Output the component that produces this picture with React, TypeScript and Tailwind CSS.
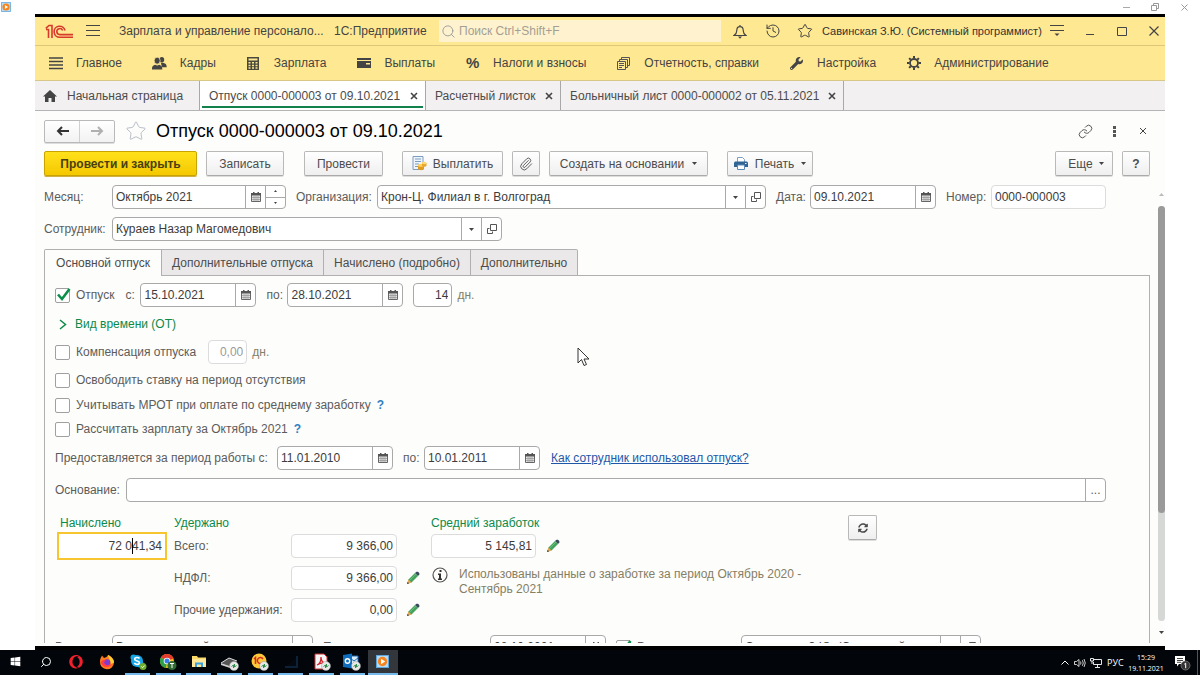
import type { ReactNode } from 'react'
import { History, Link, Paperclip, Search, Star } from 'lucide-react'
import { FaSyncAlt, FaWrench, FaWindows, FaOpera } from 'react-icons/fa'
import { clsx } from 'clsx'

/* ---------- icons ---------- */

function CalendarIcon() {
  return (
    <svg width="10" height="10" viewBox="0 0 10 10">
      <path d="M.5 1.500h9v8h-9z" fill="#e4e4e4" stroke="#666" />
      <path d="M0 1h10v2.500H0z" fill="#555" />
      <path d="M2 0h1.500v2H2zM6.500 0H8v2H6.500z" fill="#555" />
      <path d="M1 5.500h8M1 7.500h8M3 4v5M5 4v5M7 4v5" stroke="#888" strokeWidth="0.600" />
    </svg>
  )
}

function OpenIcon() {
  return (
    <svg width="10" height="10" viewBox="0 0 10 10" fill="none" stroke="#555">
      <path d="M3.500 0.500h6v6h-6z" />
      <path d="M2.500 4.500h-2v5h5v-2" />
    </svg>
  )
}

function Caret({ up = false }: { up?: boolean }) {
  return (
    <svg width="5" height="3" viewBox="0 0 5 3" fill="#444">
      <path d={up ? 'M0 3h5L2.500 0z' : 'M0 0h5L2.500 3z'} />
    </svg>
  )
}

function PencilIcon() {
  return (
    <svg width="14" height="14" viewBox="0 0 14 14">
      <path d="M1 13l1.500-4.500L9 2l3 3-6.500 6.500z" fill="#43a35c" />
      <path d="M1 13l1.500-4.500 3 3z" fill="#e8a85a" />
      <path d="M1 13l.7-2 1.300 1.300z" fill="#333" />
      <path d="M9 2l1.500-1.300h1.500L13.300 2v1.500L12 5z" fill="#3c4a5e" />
      <path d="M3.500 9.500L10 3" stroke="#6cc07e" />
    </svg>
  )
}

function Logo1C() {
  return (
    <svg width="29" height="15" viewBox="0 0 29 15" fill="none" stroke="#d8392b" strokeWidth="1.600">
      <path d="M.8 4.300L4 1.500h3V14M1 5.500h2.500V14" />
      <path d="M20 6.500A5.500 5.500 0 1 0 14.800 13.200H28" />
      <path d="M17.600 6.500A3 3 0 1 0 14.800 10.600H28" />
    </svg>
  )
}

function CloseX({ size = 8, thick = 1 }: { size?: number; thick?: number }) {
  return (
    <svg width={size} height={size} viewBox="0 0 8 8" stroke="#444" strokeWidth={thick}>
      <path d="M1 1l6 6M7 1L1 7" />
    </svg>
  )
}

function BellIcon() {
  return (
    <svg width="14" height="15" viewBox="0 0 14 15" fill="none" stroke="#444" strokeWidth="1.200">
      <path d="M7 1v1.500M3.800 6.500C3.800 4 5 2.700 7 2.700s3.200 1.300 3.200 3.800c0 2.500 1 3.700 2.800 5H1c1.800-1.300 2.800-2.500 2.800-5z" />
      <path d="M5 12.500h4L7 14.800z" fill="#444" stroke="none" />
    </svg>
  )
}

function HomeIcon() {
  return (
    <svg width="14" height="12" viewBox="0 0 14 12" fill="#444">
      <path d="M7 0l7 6.500h-2V12H8.500V8h-3v4H2V6.500H0z" />
    </svg>
  )
}

function PeopleIcon() {
  return (
    <svg width="16" height="14" viewBox="0 0 16 14" fill="#444">
      <ellipse cx="10.500" cy="3.500" rx="2.500" ry="3" />
      <path d="M9.500 7h3c2 .8 3.200 1.500 3.200 4.500h-5z" />
      <ellipse cx="5.500" cy="4.500" rx="3.200" ry="3.700" stroke="#ffe892" strokeWidth="0.800" />
      <path d="M0 14c0-3.500.7-4.200 3.500-5.200 1 1 3 1 4 0 2.800 1 3.500 1.700 3.500 5.200z" />
    </svg>
  )
}

function GearIcon() {
  return (
    <svg width="14" height="14" viewBox="0 0 14 14" fill="none" stroke="#444">
      <circle cx="7" cy="7" r="4" strokeWidth="1.800" />
      <path d="M7 0v2.500M7 11.500V14M0 7h2.500M11.500 7H14M2.100 2.100l1.700 1.700M10.200 10.200l1.700 1.700M11.900 2.100l-1.700 1.700M3.800 10.200l-1.700 1.700" strokeWidth="2" />
    </svg>
  )
}

function ListIcon() {
  return (
    <svg width="14" height="13" viewBox="0 0 14 13" stroke="#444" strokeWidth="1.500">
      <path d="M0 1h14M0 4.500h14M0 8h14M0 11.500h14" />
    </svg>
  )
}

function CalcIcon() {
  return (
    <svg width="12" height="13" viewBox="0 0 12 13">
      <path d="M0 0h12v13H0z" fill="#4a4a3c" />
      <path d="M1.500 1.500h9v2h-9zM1.500 5h2v1.500h-2zM5 5h2v1.500H5zM8.500 5h2v1.500h-2zM1.500 7.700h2v1.500h-2zM5 7.700h2v1.500H5zM8.500 7.700h2v1.500h-2zM1.500 10.300h2v1.500h-2zM5 10.300h2v1.500H5zM8.500 10.300h2v1.500h-2z" fill="#ffe892" />
    </svg>
  )
}

function WalletIcon() {
  return (
    <svg width="14" height="10" viewBox="0 0 14 10">
      <path d="M0 0h14v2H0zM0 3h14v7H0z" fill="#444" />
      <path d="M9 5h4v1.500H9z" fill="#ffe892" />
    </svg>
  )
}

function PagesIcon() {
  return (
    <svg width="13" height="13" viewBox="0 0 13 13" fill="none" stroke="#555">
      <path d="M4.500 2.500v-2h8v8h-2M2.500 4.500v-2h8v8h-2" />
      <path d="M.5 4.500h8v8h-8zM2 6.500h5M2 8.500h5M2 10.500h3" />
    </svg>
  )
}

function PayIcon() {
  return (
    <svg width="15" height="15" viewBox="0 0 15 15">
      <path d="M1 .5h10v13H1z" fill="#eef4fb" stroke="#7f9dbf" />
      <path d="M3 3h6M3 5.500h6M3 8h4M3 10.500h3" stroke="#7f9dbf" />
      <path d="M6 9v4c1 1.500 5 1.500 6 0V9z" fill="#e29a1e" />
      <ellipse cx="9" cy="9.200" rx="3" ry="1.500" fill="#ffd25e" />
      <path d="M10 7v3c1 1 3.500 1 4.500 0V7z" fill="#e8a52a" />
      <ellipse cx="12.200" cy="7" rx="2.300" ry="1.200" fill="#ffd86e" />
    </svg>
  )
}

function PrinterIcon() {
  return (
    <svg width="14" height="13" viewBox="0 0 14 13">
      <path d="M3.500 5V.5h5l2 2V5" fill="#fff" stroke="#7aa0c4" />
      <path d="M1 4.500h12l1 1V10H0V5.500z" fill="#2f6495" />
      <path d="M3.500 8h7v4.500h-7z" fill="#fff" stroke="#5a8ab5" />
      <path d="M11 6h1.500v1H11z" fill="#fff" />
    </svg>
  )
}

/* ---------- form parts ---------- */

interface FieldProps {
  id: string
  value: string
  label?: string
  className?: string
  right?: boolean
  muted?: boolean
  disabled?: boolean
  children?: ReactNode
}

function Field({ id, value, label, className, right, muted, disabled, children }: FieldProps) {
  return (
    <div
      className={clsx(
        'flex h-6 items-stretch overflow-hidden rounded border bg-white',
        muted ? 'border-[#dcdcdc]' : 'border-[#a9a9a9]',
        className,
      )}
    >
      <input
        id={id}
        aria-label={label}
        defaultValue={value}
        readOnly={muted}
        disabled={disabled}
        className={clsx(
          'w-full min-w-0 flex-1 bg-transparent px-[3px] outline-none',
          right && 'text-right',
          disabled ? 'text-[#999]' : 'text-[#3c3c3c]',
        )}
      />
      {children}
    </div>
  )
}

function FieldButton({ label, children }: { label: string; children?: ReactNode }) {
  return (
    <button type="button" aria-label={label} className="flex w-5 shrink-0 items-center justify-center border-l border-[#a9a9a9]">
      {children}
    </button>
  )
}

function DateField({ id, value, className, label }: { id: string; value: string; className?: string; label?: string }) {
  return (
    <Field id={id} value={value} label={label} className={clsx('shrink-0', className)}>
      <FieldButton label="Выбрать дату"><CalendarIcon /></FieldButton>
    </Field>
  )
}

function Check({ id, label, checked = false }: { id: string; label: string; checked?: boolean }) {
  return (
    <div className="flex items-center gap-[6px]">
      <span className="relative flex">
        <input
          id={id}
          type="checkbox"
          defaultChecked={checked}
          className="peer h-[15px] w-[15px] appearance-none rounded-xs border border-[#a0a0a0] bg-white"
        />
        <svg className="pointer-events-none absolute bottom-px left-px hidden peer-checked:block" width="15" height="14" viewBox="0 0 15 14" fill="none" stroke="#0a8f4a" strokeWidth="2.600">
          <path d="M2 6.500l4 4.500L13.500 1" />
        </svg>
      </span>
      <label htmlFor={id}>{label}</label>
    </div>
  )
}

function ToolButton({ className, label, children }: { className?: string; label?: string; children: ReactNode }) {
  return (
    <button
      type="button"
      aria-label={label}
      className={clsx(
        'flex h-[25px] shrink-0 items-center justify-center rounded-xs border border-[#b9b9b9] border-b-[#aaa] bg-linear-to-b from-white to-[#efefef] text-[#4c4c4c] shadow-[0_1px_0_#ddd]',
        className,
      )}
    >
      {children}
    </button>
  )
}

/* ---------- application chrome ---------- */

const menu = [
  { title: 'Главное', icon: <ListIcon /> },
  { title: 'Кадры', icon: <PeopleIcon /> },
  { title: 'Зарплата', icon: <CalcIcon /> },
  { title: 'Выплаты', icon: <WalletIcon /> },
  { title: 'Налоги и взносы', icon: <b className="text-[15px]">%</b> },
  { title: 'Отчетность, справки', icon: <PagesIcon /> },
  { title: 'Настройка', icon: <FaWrench size={13} /> },
  { title: 'Администрирование', icon: <GearIcon /> },
]

function TitleBar() {
  return (
    <header className="flex h-[29px] shrink-0 items-center border-b border-[#dcc878] bg-[#ffe892] pr-1 pl-[10px] text-[#444]">
      <Logo1C />
      <button type="button" aria-label="Меню" className="ml-3">
        <svg width="14" height="12" viewBox="0 0 14 12" stroke="#444"><path d="M0 .5h14M0 5.500h14M0 10.500h14" /></svg>
      </button>
      <span className="ml-[19px] w-[208px] whitespace-nowrap">Зарплата и управление персонало...</span>
      <span className="ml-[7px] w-[94px] whitespace-nowrap">1С:Предприятие</span>
      <div className="ml-[11px] flex h-[22px] flex-1 items-center gap-[3px] bg-[#fff3cf] px-[2px]">
        <Search size={15} strokeWidth={1.5} color="#999" />
        <input aria-label="Поиск" placeholder="Поиск Ctrl+Shift+F" className="min-w-0 flex-1 bg-transparent outline-none placeholder:text-[#a39f92]" />
      </div>
      <button type="button" aria-label="Уведомления" className="ml-3"><BellIcon /></button>
      <button type="button" aria-label="История" className="ml-[18px]"><History size={16} strokeWidth={1.5} /></button>
      <button type="button" aria-label="Избранное" className="ml-4"><Star size={16} strokeWidth={1.5} /></button>
      <span className="ml-[9px] w-[215px] whitespace-nowrap text-[11px] text-[#333]">Савинская З.Ю. (Системный программист)</span>
      <button type="button" aria-label="Настройка панели" className="ml-[13px]">
        <svg width="14" height="12" viewBox="0 0 14 12" stroke="#444"><path d="M0 .5h14M0 5.500h14" /><path d="M4.500 8.500h5L7 11z" fill="#444" stroke="none" /></svg>
      </button>
      <button type="button" aria-label="Свернуть" className="ml-[21px]">
        <svg width="10" height="10" viewBox="0 0 10 10" stroke="#444"><path d="M1 8.500h8" /></svg>
      </button>
      <button type="button" aria-label="Развернуть" className="ml-[22px]">
        <svg width="10" height="10" viewBox="0 0 10 10" stroke="#444" fill="none"><path d="M.5 1.500h9v8h-9z" /></svg>
      </button>
      <button type="button" aria-label="Закрыть" className="mr-px ml-[21px]"><CloseX size={12} thick={0.8} /></button>
    </header>
  )
}

function MainMenu() {
  return (
    <nav className="flex h-[35px] shrink-0 items-center gap-[30px] border-b border-[#d8c888] bg-[#ffe892] pl-[13px] text-[#444]">
      {menu.map((item) => (
        <button key={item.title} type="button" className="flex items-center gap-[13px] whitespace-nowrap">
          <span className="flex w-[15px] justify-center text-[#444]">{item.icon}</span>
          {item.title}
        </button>
      ))}
    </nav>
  )
}

function OpenTab({ title, active, className }: { title: string; active?: boolean; className: string }) {
  return (
    <div className={clsx('flex border-r border-[#a8a8a8] px-[2px] pb-[2px]', active && 'bg-white', className)}>
      <div className={clsx('flex flex-1 items-center justify-between border-b-2 pt-1 pr-[5px] pl-[7px]', active ? 'border-[#12824c]' : 'border-transparent')}>
        <button type="button" className="whitespace-nowrap">{title}</button>
        <button type="button" aria-label={'Закрыть ' + title}><CloseX thick={1.6} /></button>
      </div>
    </div>
  )
}

function OpenTabs() {
  return (
    <div className="flex h-[30px] shrink-0 border-b border-[#b4b4b4] bg-[#f2f0f0] text-[#4c4c4c]">
      <button type="button" className="flex w-[165px] items-center gap-[10px] border-r border-[#a8a8a8] pl-2 whitespace-nowrap">
        <HomeIcon />
        Начальная страница
      </button>
      <OpenTab active title="Отпуск 0000-000003 от 09.10.2021" className="w-[226px]" />
      <OpenTab title="Расчетный листок" className="w-[135px]" />
      <OpenTab title="Больничный лист 0000-000002 от 05.11.2021" className="w-[283px]" />
    </div>
  )
}

/* ---------- document ---------- */

function DocHeader() {
  return (
    <>
      <div className="mr-[15px] ml-[9px] flex h-[22px] shrink-0 items-center text-[#555]">
        <div className="flex h-[23px] w-[71px] rounded-xs border border-[#b9b9b9] bg-linear-to-b from-white to-[#f2f2f2] shadow-[0_1px_0_#ddd]">
          <button type="button" aria-label="Назад" className="flex flex-1 items-center justify-center border-r border-[#d0d0d0]">
            <svg width="13" height="10" viewBox="0 0 13 10" fill="none" stroke="#333" strokeWidth="2"><path d="M13 5H2M6 1L2 5l4 4" /></svg>
          </button>
          <button type="button" aria-label="Вперед" className="flex flex-1 items-center justify-center">
            <svg width="13" height="10" viewBox="0 0 13 10" fill="none" stroke="#b0b0b0" strokeWidth="2"><path d="M0 5h11M7 1l4 4-4 4" /></svg>
          </button>
        </div>
        <button type="button" aria-label="В избранное" className="ml-[10px]">
          <Star size={22} strokeWidth={1} color="#b4b8c2" />
        </button>
        <h1 className="ml-[9px] text-[18px] whitespace-nowrap text-black">Отпуск 0000-000003 от 09.10.2021</h1>
        <button type="button" aria-label="Ссылка" className="ml-auto"><Link size={15} strokeWidth={1.6} /></button>
        <button type="button" aria-label="Действия" className="ml-5">
          <svg width="3" height="11" viewBox="0 0 3 11" fill="#555"><path d="M0 0h3v3H0zM0 4h3v3H0zM0 8h3v3H0z" /></svg>
        </button>
        <button type="button" aria-label="Закрыть документ" className="mr-[3px] ml-[23px]"><CloseX /></button>
      </div>

      <div className="mt-[9px] mr-[15px] ml-[9px] flex shrink-0">
        <button type="button" className="h-[25px] w-[153px] rounded-xs border border-[#c9a300] bg-linear-to-b from-[#ffe11a] to-[#f5c800] font-bold text-[#4a3f10] shadow-[0_1px_0_#d0b040]">
          Провести и закрыть
        </button>
        <ToolButton className="ml-[9px] w-[78px]">Записать</ToolButton>
        <ToolButton className="ml-5 w-[79px]">Провести</ToolButton>
        <ToolButton className="ml-[19px] w-[101px] gap-[6px]"><PayIcon />Выплатить</ToolButton>
        <ToolButton className="ml-[9px] w-7" label="Вложения"><Paperclip size={14} strokeWidth={1.5} /></ToolButton>
        <ToolButton className="ml-[9px] w-[159px] gap-2">Создать на основании<Caret /></ToolButton>
        <ToolButton className="ml-[19px] w-[86px] gap-[7px]"><PrinterIcon />Печать<Caret /></ToolButton>
        <ToolButton className="ml-auto w-[58px] gap-[6px] pl-1">Еще<Caret /></ToolButton>
        <ToolButton className="ml-[9px] w-7 font-bold" label="Справка">?</ToolButton>
      </div>
    </>
  )
}

function DocFields() {
  return (
    <>
      <div className="mr-11 flex items-center">
        <label htmlFor="month" className="w-[68px]">Месяц:</label>
        <Field id="month" value="Октябрь 2021" className="w-[174px]">
          <FieldButton label="Выбрать месяц"><CalendarIcon /></FieldButton>
          <div className="flex w-5 flex-col border-l border-[#a9a9a9]">
            <button type="button" aria-label="Больше" className="flex flex-1 items-center justify-center border-b border-[#a9a9a9]">
              <svg width="3" height="2" viewBox="0 0 3 2"><path d="M0 2h3L1.500 0z" fill="#444" /></svg>
            </button>
            <button type="button" aria-label="Меньше" className="flex flex-1 items-center justify-center">
              <svg width="3" height="2" viewBox="0 0 3 2"><path d="M0 0h3L1.500 2z" fill="#444" /></svg>
            </button>
          </div>
        </Field>
        <label htmlFor="org" className="ml-[10px] w-[81px]">Организация:</label>
        <Field id="org" value="Крон-Ц. Филиал в г. Волгоград" className="flex-1">
          <FieldButton label="Список"><Caret /></FieldButton>
          <FieldButton label="Открыть"><OpenIcon /></FieldButton>
        </Field>
        <label htmlFor="date" className="ml-[10px] w-[34px]">Дата:</label>
        <DateField id="date" value="09.10.2021" className="w-[126px]" />
        <label htmlFor="number" className="ml-[10px] w-[45px]">Номер:</label>
        <Field id="number" value="0000-000003" muted className="w-[115px]" />
      </div>
      <div className="mt-2 flex items-center">
        <label htmlFor="employee" className="w-[68px]">Сотрудник:</label>
        <Field id="employee" value="Кураев Назар Магомедович" className="w-[390px]">
          <FieldButton label="Список"><Caret /></FieldButton>
          <FieldButton label="Открыть"><OpenIcon /></FieldButton>
        </Field>
      </div>
    </>
  )
}

function PageTabs() {
  const tab = 'border-t border-r border-b border-[#b0b0b0] bg-[#eae8e8]'
  return (
    <div role="tablist" className="mt-2 flex h-[27px] shrink-0 text-[#4c4c4c]">
      <button type="button" role="tab" aria-selected="true" className="w-[118px] rounded-tl-xs border-t border-r border-l border-[#b0b0b0] whitespace-nowrap">Основной отпуск</button>
      <button type="button" role="tab" aria-selected="false" className={clsx('w-[162px] whitespace-nowrap', tab)}>Дополнительные отпуска</button>
      <button type="button" role="tab" aria-selected="false" className={clsx('w-[147px] whitespace-nowrap', tab)}>Начислено (подробно)</button>
      <button type="button" role="tab" aria-selected="false" className={clsx('w-[107px] rounded-tr-xs whitespace-nowrap', tab)}>Дополнительно</button>
      <div className="flex-1 border-b border-[#b0b0b0]" />
    </div>
  )
}

function PencilButton() {
  return <button type="button" aria-label="Изменить"><PencilIcon /></button>
}

function Totals() {
  return (
    <div className="mt-[13px] flex shrink-0 items-start">
      <div className="ml-[2px] w-[110px]">
        <label htmlFor="accrued" className="block h-4 pl-[3px] leading-4 text-[#0b8a4b]">Начислено</label>
        <div className="relative mt-px flex h-7 items-center border-2 border-[#f7c52f] bg-white">
          <input id="accrued" defaultValue="72 041,34" className="w-full bg-transparent pr-[3px] text-right text-[#3c3c3c] outline-none" />
          <span className="absolute top-1 right-[32px] h-4 w-px bg-black" />
        </div>
      </div>

      <div className="ml-[7px] w-[257px]">
        <h2 className="h-4 leading-4 text-[#0b8a4b]">Удержано</h2>
        <div className="mt-[3px] grid grid-cols-[117px_106px_auto] items-center gap-y-2">
          <label htmlFor="total">Всего:</label>
          <Field id="total" value="9 366,00" right muted />
          <span />
          <label htmlFor="ndfl">НДФЛ:</label>
          <Field id="ndfl" value="9 366,00" right muted />
          <span className="flex pl-[9px]"><PencilButton /></span>
          <label htmlFor="other" className="whitespace-nowrap">Прочие удержания:</label>
          <Field id="other" value="0,00" right muted />
          <span className="flex pl-[9px]"><PencilButton /></span>
        </div>
      </div>

      <div className="w-[417px]">
        <label htmlFor="average" className="block h-4 leading-4 text-[#0b8a4b]">Средний заработок</label>
        <div className="mt-[3px] flex items-center gap-[10px]">
          <Field id="average" value="5 145,81" right muted className="w-[105px]" />
          <PencilButton />
        </div>
        <div className="mt-[9px] flex items-start gap-[11px]">
          <svg width="16" height="16" viewBox="0 0 16 16" className="ml-px shrink-0">
            <circle cx="8" cy="8" r="7" fill="none" stroke="#555" strokeWidth="1.200" />
            <path d="M7.500 3h2v2h-2zM6 6.500h3v5h1V13H6v-1.500h1V8H6z" fill="#333" />
          </svg>
          <p className="w-[360px] leading-[15px] text-[#857f66]">
            Использованы данные о заработке за период Октябрь 2020 - Сентябрь 2021
          </p>
        </div>
      </div>

      <ToolButton className="w-[29px]" label="Обновить"><FaSyncAlt size={10} /></ToolButton>
    </div>
  )
}

function VacationPage() {
  return (
    <div className="flex min-h-0 flex-1 flex-col overflow-hidden border-r border-l border-[#b0b0b0] px-[10px] pt-[7px]">
      <div className="flex shrink-0 items-center">
        <Check id="vacation" label="Отпуск" checked />
        <label htmlFor="from" className="ml-[11px] w-[15px]">с:</label>
        <DateField id="from" value="15.10.2021" className="w-[116px]" />
        <label htmlFor="to" className="ml-[10px] w-[21px]">по:</label>
        <DateField id="to" value="28.10.2021" className="w-[116px]" />
        <Field id="days" value="14" label="Дней" right className="ml-[10px] w-[39px]" />
        <span className="ml-[5px] text-[#857f66]">дн.</span>
      </div>
      <button type="button" className="mt-[9px] flex h-4 shrink-0 items-center gap-2 pl-1 text-[#0b8a4b]">
        <svg width="8" height="11" viewBox="0 0 8 11" fill="none" stroke="#0b8a4b" strokeWidth="1.500"><path d="M1 1l5.500 4.500L1 10" /></svg>
        Вид времени (ОТ)
      </button>
      <div className="mt-2 flex shrink-0 items-center">
        <Check id="compensation" label="Компенсация отпуска" />
        <Field id="compDays" value="0,00" label="Дней компенсации" right muted disabled className="ml-3 w-[39px]" />
        <span className="ml-[5px] text-[#857f66]">дн.</span>
      </div>
      <div className="mt-2 flex h-4 shrink-0 items-center">
        <Check id="release" label="Освободить ставку на период отсутствия" />
      </div>
      <div className="mt-[9px] flex h-4 shrink-0 items-center gap-[6px]">
        <Check id="mrot" label="Учитывать МРОТ при оплате по среднему заработку" />
        <button type="button" className="font-bold text-[#2f80c4]">?</button>
      </div>
      <div className="mt-2 flex h-4 shrink-0 items-center gap-[6px]">
        <Check id="calc" label="Рассчитать зарплату за Октябрь 2021" />
        <button type="button" className="font-bold text-[#2f80c4]">?</button>
      </div>
      <div className="mt-[9px] flex shrink-0 items-center">
        <label htmlFor="workFrom" className="w-[222px] whitespace-nowrap">Предоставляется за период работы с:</label>
        <DateField id="workFrom" value="11.01.2010" className="w-[116px]" />
        <label htmlFor="workTo" className="ml-[10px] w-[21px]">по:</label>
        <DateField id="workTo" value="10.01.2011" className="w-[116px]" />
        <a href="#usage" className="ml-[11px] text-[#1f58a8] underline">Как сотрудник использовал отпуск?</a>
      </div>
      <div className="mt-2 mr-[33px] flex shrink-0 items-center">
        <label htmlFor="basis" className="w-[71px]">Основание:</label>
        <Field id="basis" value="" className="flex-1">
          <FieldButton label="Выбрать основание">...</FieldButton>
        </Field>
      </div>
      <Totals />
      <div className="mt-[13px] flex shrink-0 items-center">
        <label htmlFor="payment" className="w-[57px]">Выплата:</label>
        <Field id="payment" value="В межрасчетный период" className="w-[201px]">
          <FieldButton label="Список"><Caret /></FieldButton>
        </Field>
        <label htmlFor="payDate" className="ml-[10px] w-[167px]">Планируемая дата выплаты:</label>
        <DateField id="payDate" value="08.10.2021" className="w-[116px]" />
        <div className="ml-[10px] w-[125px]"><Check id="approved" label="Расчет утвердил:" checked /></div>
        <Field id="approver" label="Утвердил" value="Савинская З.Ю. (Системный программист)" className="w-[240px]">
          <FieldButton label="Список"><Caret /></FieldButton>
          <FieldButton label="Открыть"><OpenIcon /></FieldButton>
        </Field>
      </div>
    </div>
  )
}

function ScrollRail() {
  return (
    <div className="flex w-[7px] shrink-0 flex-col items-center pt-2 pb-[9px]">
      <svg width="5" height="3" viewBox="0 0 5 3"><path d="M0 3h5L2.500 0z" fill="#bbb" /></svg>
      <div className="my-[10px] w-full flex-1 rounded-full bg-[#d6d8d6]">
        <div className="h-[74%] rounded-full bg-[#9a9a9a]" />
      </div>
      <Caret />
    </div>
  )
}

/* ---------- taskbar ---------- */

function Badge() {
  return (
    <>
      <circle cx="13" cy="13" r="4.500" fill="#e8e8e8" stroke="#999" strokeWidth="0.500" />
      <path d="M10.500 13.500l2-1.500v3M15.500 12.500l-2 1.500v-3" stroke="#2f8f4a" fill="none" />
    </>
  )
}

const apps = [
  { name: 'Пуск', icon: <FaWindows size={11} color="#fff" /> },
  { name: 'Поиск', icon: <Search size={12} color="#fff" strokeWidth={2} className="-scale-x-100" /> },
  { name: 'Opera', icon: <FaOpera size={14} color="#f0202c" /> },
  {
    name: 'Firefox',
    icon: (
      <svg width="16" height="16" viewBox="0 0 16 16">
        <path d="M1 8C1 4 2.500 3 3 1.500L5 4C7 3 8 3 9 1c3 1.500 6 4 6 7.500A7 7 0 0 1 1 8z" fill="#ff7a1a" />
        <path d="M9 1c3 1.500 6 4 6 7.500L12 10C12 6 9 4 9 1z" fill="#ffcf33" />
        <circle cx="8" cy="8.500" r="3.200" fill="#7a3bd0" />
        <path d="M2 9c1 4 8 6 11 1-1 1-5 2-7 0C4 8 6 7 7 7 5 5 2 6 2 9z" fill="#ff3a4a" />
      </svg>
    ),
  },
  {
    name: 'Skype',
    running: true,
    icon: (
      <svg width="18" height="18" viewBox="0 0 18 18">
        <circle cx="8" cy="8" r="6" fill="#16a6e8" /><circle cx="4.500" cy="4.500" r="3" fill="#16a6e8" /><circle cx="11" cy="11" r="3.500" fill="#16a6e8" />
        <path d="M10.500 5.500C9.500 4 5.700 4 5.700 6.200S10.500 7.800 10.500 9.800 6.500 12 5.300 10" fill="none" stroke="#fff" strokeWidth="1.600" />
        <circle cx="14" cy="13.500" r="3.500" fill="#6fae2a" /><path d="M12.300 13.500l1.200 1.200 2.200-2.200" stroke="#fff" fill="none" />
      </svg>
    ),
  },
  {
    name: 'Chrome',
    running: true,
    icon: (
      <svg width="18" height="18" viewBox="0 0 18 18">
        <circle cx="8" cy="8" r="7" fill="#fbc116" />
        <path d="M8 8L1.900 4.500A7 7 0 0 1 14.500 5.500z" fill="#e33b2e" /><path d="M8 8L7 15A7 7 0 0 1 1.900 4.500z" fill="#2ba24c" />
        <circle cx="8" cy="8" r="3.300" fill="#fff" /><circle cx="8" cy="8" r="2.500" fill="#3b7ded" />
        <circle cx="13" cy="12.500" r="4.500" fill="#2f6b33" /><path d="M11 10.500h4M13 10.500v4.500" stroke="#fff" />
      </svg>
    ),
  },
  {
    name: 'Проводник',
    running: true,
    icon: (
      <svg width="14" height="13" viewBox="0 0 14 13">
        <path d="M0 1h5l1 1.500h8V12H0z" fill="#fbd968" /><path d="M0 4h14v8H0z" fill="#ffe79a" /><path d="M3 12V7.500h8V12H9V9.500H5V12z" fill="#3aa0e0" />
      </svg>
    ),
  },
  {
    name: 'Сканер',
    running: true,
    icon: (
      <svg width="18" height="18" viewBox="0 0 18 18">
        <path d="M0 10L8 5l8 3-7 5z" fill="#555" /><path d="M0 10L8 5l8 3" stroke="#ddd" fill="none" /><path d="M0 10l9 3v2l-9-3z" fill="#ccc" /><Badge />
      </svg>
    ),
  },
  {
    name: '1С',
    running: true,
    icon: (
      <svg width="18" height="18" viewBox="0 0 18 18">
        <circle cx="8" cy="8" r="7.500" fill="#ffc93a" /><path d="M3 6l1.500-1.500V11M12 6a3 3 0 1 0-3 4.500h4" stroke="#d42b1e" strokeWidth="1.500" fill="none" /><Badge />
      </svg>
    ),
  },
  {
    name: 'Консоль',
    running: true,
    icon: <svg width="14" height="14" viewBox="0 0 14 14"><path d="M13 1v11H1" stroke="#0c2238" strokeWidth="2" fill="#05080f" /></svg>,
  },
  {
    name: 'Acrobat',
    running: true,
    icon: (
      <svg width="18" height="18" viewBox="0 0 18 18">
        <path d="M2 1h9l3 3v12H2z" fill="#f5f5f5" stroke="#c33" /><path d="M4 12c3-1 4-5 4-8 0 4 2 6 5 6-3-.5-6 0-9 2z" stroke="#d1232a" strokeWidth="1.300" fill="none" /><Badge />
      </svg>
    ),
  },
  {
    name: 'Outlook',
    running: true,
    icon: (
      <svg width="18" height="18" viewBox="0 0 18 18">
        <path d="M7 3h8v10H7z" fill="#dceaf8" stroke="#0f6cbd" /><path d="M7 5l4 3 4-3" stroke="#0f6cbd" fill="none" /><path d="M0 2l9-1.500v15L0 14z" fill="#0f6cbd" />
        <circle cx="4.500" cy="8" r="2.200" fill="none" stroke="#fff" strokeWidth="1.400" /><Badge />
      </svg>
    ),
  },
  { name: 'Проигрыватель', running: true, active: true, icon: <PlayerIcon size={13} /> },
]

function PlayerIcon({ size }: { size: number }) {
  return (
    <svg width={size} height={size} viewBox="0 0 12 12">
      <path d="M.5 .5h11v11H.5z" fill="#b9dcf4" stroke="#5ea6dc" />
      <circle cx="6" cy="6" r="4.300" fill="#f5841f" />
      <path d="M4.700 3.500L8.500 6 4.700 8.500z" fill="#fff" />
    </svg>
  )
}

function Taskbar() {
  return (
    <footer className="flex h-[25px] shrink-0 items-stretch bg-[#020509] text-white">
      <div className="flex w-[398px] justify-between">
        {apps.map((app) => (
          <button
            key={app.name}
            type="button"
            aria-label={app.name}
            className={clsx('flex w-[30px] items-center justify-center', app.active && 'bg-[#33373c]')}
          >
            <span
              className={clsx(
                'flex h-full items-center justify-center border-b-2',
                app.active ? 'w-[30px]' : 'w-[25px]',
                app.running ? 'border-[#76b9ed]' : 'border-transparent',
              )}
            >
              {app.icon}
            </span>
          </button>
        ))}
      </div>
      <div className="ml-auto flex items-center font-['Open_Sans',sans-serif] text-[9px]">
        <svg width="8" height="5" viewBox="0 0 8 5" fill="none" stroke="#fff"><path d="M.5 4.500L4 1l3.500 3.500" /></svg>
        <svg className="ml-[5px]" width="12" height="10" viewBox="0 0 12 10" fill="none" stroke="#fff">
          <path d="M.5 3.500h2L5 1.500v7L2.500 6.500h-2zM6.500 3.500q1 1.500 0 3M8.300 2.200q2 2.800 0 5.600M10 1q2.500 4 0 8" strokeWidth="0.800" />
        </svg>
        <svg className="ml-[4px]" width="12" height="10" viewBox="0 0 12 10" fill="none" stroke="#fff"><path d="M4 1.500h7.500v5H3.500V4M7.500 6.500v2.500M5 9.500h5M.5 .5h3v2.500h-3zM2 3v3" strokeWidth="0.900" /></svg>
        <span className="ml-[5px] w-[15px]">РУС</span>
        <div className="ml-[6px] w-9 text-center text-[7px] leading-[11px]">
          <div>15:29</div>
          <div>19.11.2021</div>
        </div>
        <button type="button" aria-label="Уведомления системы" className="mr-[6px] ml-[10px]">
          <svg width="17" height="16" viewBox="0 0 17 16">
            <path d="M1 1h10v8H5l-2 2.500V9H1z" fill="#fff" /><path d="M3 3.500h6M3 5.500h6M3 7.300h4" stroke="#111" strokeWidth="0.800" />
            <circle cx="11.500" cy="10.500" r="4.500" fill="#333" stroke="#888" strokeWidth="0.700" /><path d="M10.300 9.200l1.400-1v5" stroke="#fff" fill="none" />
          </svg>
        </button>
        <span className="h-full w-[3px] border-l border-[#555]" />
      </div>
    </footer>
  )
}

export default function App() {
  return (
    <div className="relative flex h-screen flex-col overflow-hidden bg-white font-['Liberation_Sans',Arial,sans-serif] text-[12px] leading-4 text-[#5c5c5c]">
      <div className="flex h-[14px] shrink-0 items-center pr-3 pl-px">
        <PlayerIcon size={10} />
        <svg className="ml-auto" width="7" height="7" viewBox="0 0 7 7" stroke="#aaa"><path d="M0 3.500h7" /></svg>
        <svg className="ml-[21px]" width="8" height="8" viewBox="0 0 8 8" fill="none" stroke="#999"><path d="M.5 2.500h5v5h-5zM2.500 2V.5h5v5H6" /></svg>
        <svg className="ml-[22px]" width="7" height="7" viewBox="0 0 7 7" stroke="#999"><path d="M.5 .5l6 6M6.500 .5l-6 6" /></svg>
      </div>

      <main className="mx-[35px] flex min-h-0 flex-1 flex-col overflow-hidden border-t-3 border-b-4 border-black bg-[#fdfdfb]">
        <TitleBar />
        <MainMenu />
        <OpenTabs />
        <div className="flex min-h-0 flex-1 flex-col pt-[9px] pb-[3px]">
          <DocHeader />
          <div className="mt-[9px] flex min-h-0 flex-1">
            <div className="mr-2 ml-[9px] flex min-h-0 min-w-0 flex-1 flex-col">
              <DocFields />
              <PageTabs />
              <VacationPage />
            </div>
            <ScrollRail />
          </div>
        </div>
      </main>

      <Taskbar />

      {/* mouse pointer */}
      <svg className="pointer-events-none absolute top-[347px] left-[577px]" width="13" height="20" viewBox="0 0 13 20">
        <path d="M1 1v15l3.500-3.500L7 18.500l2.500-1L7 12h5z" fill="#fff" stroke="#333" />
      </svg>
    </div>
  )
}
